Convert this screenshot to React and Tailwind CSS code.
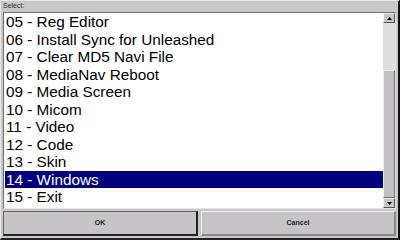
const ITEMS = [
  '05 - Reg Editor',
  '06 - Install Sync for Unleashed',
  '07 - Clear MD5 Navi File',
  '08 - MediaNav Reboot',
  '09 - Media Screen',
  '10 - Micom',
  '11 - Video',
  '12 - Code',
  '13 - Skin',
  '14 - Windows',
  '15 - Exit',
]

const SELECTED = 9

function Arrow({ down }) {
  return (
    <svg width="5" height="3" viewBox="0 0 5 3">
      <path d={down ? 'M0 0H5L2.5 3Z' : 'M0 3H5L2.5 0Z'} fill="#000" />
    </svg>
  )
}

function ScrollButton({ down }) {
  return (
    <div className="h-[10px] shrink-0 bg-[#c6c6c6] border border-t-[#f0f0f0] border-l-[#f0f0f0] border-r-[#555] border-b-[#555] flex items-center justify-center">
      <Arrow down={down} />
    </div>
  )
}

export default function App() {
  return (
    <div className="w-[400px] h-[240px] bg-[#c8c8c8] flex flex-col border-t border-l border-t-[#e8e8e8] border-l-[#e8e8e8] border-r-2 border-b-2 border-r-[#111] border-b-[#222] font-['Liberation_Sans',sans-serif] overflow-hidden">
      {/* Label */}
      <div className="h-[11px] px-[2px] text-[7px] leading-[10px] text-[#333] shrink-0">Select:</div>

      {/* List box */}
      <div className="mx-[2px] h-[197px] shrink-0 flex bg-white border-t border-l border-t-[#6e6e6e] border-l-[#6e6e6e] border-r border-b border-r-[#e6e6e6] border-b-[#e6e6e6]">
        <div className="flex-1 pl-[1px] overflow-hidden">
          {ITEMS.map((label, i) => (
            <div
              key={label}
              className={`h-[17.5px] leading-[17.5px] text-[15.3px] pl-[1px] whitespace-nowrap ${i === SELECTED ? 'bg-[#000080] text-white' : 'text-black'}`}
            >
              {label}
            </div>
          ))}
        </div>
        {/* Scrollbar */}
        <div className="w-[12px] flex flex-col bg-[#dedede]">
          <ScrollButton />
          <div className="h-[47px] shrink-0" />
          <div className="flex-1 bg-[#c2c0c2] border border-t-[#eee] border-l-[#eee] border-r-[#707070] border-b-[#707070]" />
          <ScrollButton down />
        </div>
      </div>

      {/* Buttons */}
      <div className="flex gap-[3px] px-[2px] pt-[2px] flex-1">
        <button className="flex-1 h-[25px] bg-[#c6c4c6] border border-t-[#666] border-l-[#666] border-r-2 border-b-2 border-r-[#222] border-b-[#222] text-[7px] font-bold text-[#222] flex items-center justify-center">
          OK
        </button>
        <button className="flex-1 h-[25px] bg-[#c6c4c6] border border-t-[#eee] border-l-[#eee] border-r-2 border-b-2 border-r-[#888] border-b-[#888] text-[7px] font-bold text-[#222] flex items-center justify-center">
          Cancel
        </button>
      </div>
    </div>
  )
}
